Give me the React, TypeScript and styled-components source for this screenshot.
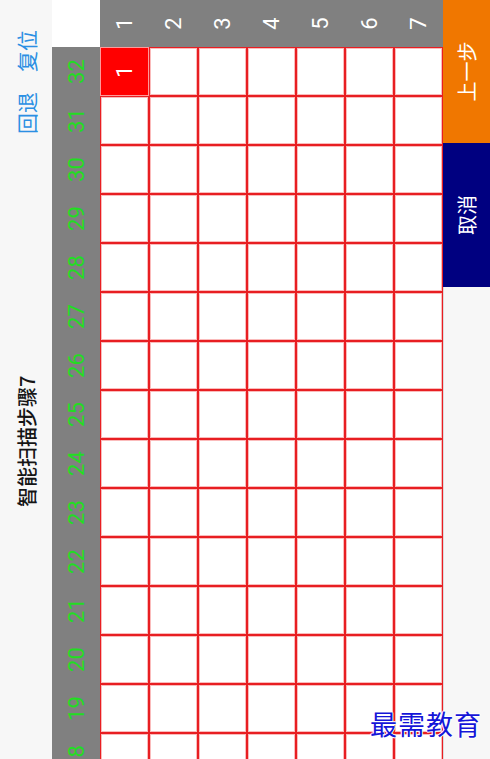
import styled, {createGlobalStyle} from 'styled-components'

const GlobalStyle = createGlobalStyle`
  html, body {
    margin: 0;
    padding: 0;
    background: #f7f7f7;
  }
  body {
    font-family: Roboto, "Noto Sans CJK SC", sans-serif;
  }
`

const FIRST = 18
const LAST = 32
const ROWS = 7
const CELL = 49

const Screen = styled.div`
  position: relative;
  width: 490px;
  height: 759px;
  overflow: hidden;
  background: #f7f7f7;
`

// the app is drawn in landscape and the device shows it turned a quarter left
const Landscape = styled.div`
  width: 759px;
  height: 490px;
  display: flex;
  flex-direction: column;
  transform-origin: top left;
  transform: rotate(-90deg) translateX(-100%);
`

const TopBar = styled.div`
  flex: none;
  height: 52px;
  box-sizing: border-box;
  padding: 0 30px 0 252px;
  display: flex;
  align-items: center;
  background: #f7f7f7;
`

const Title = styled.div`
  flex: 1;
  font-family: "Noto Sans CJK SC", sans-serif;
  font-size: 20px;
  font-weight: 500;
  color: #151515;
`

const LinkButton = styled.button`
  margin-left: 20px;
  padding: 0;
  border: none;
  background: none;
  font-family: "Noto Sans CJK SC", sans-serif;
  font-size: 21px;
  color: #2b8fe3;
  cursor: pointer;
`

const Middle = styled.div`
  flex: 1;
  min-height: 0;
  display: flex;
`

const Board = styled.div`
  flex: 1;
  min-width: 0;
  overflow: hidden;
  display: flex;
  flex-direction: column;
`

const Strip = styled.div<{$head?: boolean}>`
  flex: none;
  height: ${p => (p.$head ? 48 : CELL)}px;
  display: flex;
  justify-content: flex-end;
  background: ${p => (p.$head ? '#808080' : '#fff')};
`

const Label = styled.div<{$color: string; $tall?: boolean}>`
  flex: none;
  width: ${p => (p.$tall ? 'auto' : `${CELL}px`)};
  height: ${p => (p.$tall ? `${CELL}px` : 'auto')};
  display: flex;
  align-items: center;
  justify-content: center;
  font-size: 22px;
  color: ${p => p.$color};
`

const Cell = styled.div<{$on?: boolean}>`
  flex: none;
  width: ${CELL}px;
  height: ${CELL}px;
  box-sizing: border-box;
  border: 1px solid ${p => (p.$on ? '#ff9a9a' : '#e81e22')};
  box-shadow: ${p => (p.$on ? 'none' : 'inset 0 0 0 1px rgba(240, 60, 60, 0.35)')};
  background: ${p => (p.$on ? '#ff0000' : '#fff')};
  display: flex;
  align-items: center;
  justify-content: center;
  font-size: 22px;
  color: #fff;
`

const Rail = styled.div`
  flex: none;
  width: 47px;
  display: flex;
  flex-direction: column;
`

const Corner = styled.div`
  height: 48px;
  background: #fff;
`

const RailHead = styled.div`
  flex: 1;
  display: flex;
  flex-direction: column;
  background: #808080;
`

const BottomBar = styled.div`
  flex: none;
  height: 47px;
  display: flex;
  justify-content: flex-end;
  background: #f7f7f7;
  box-shadow: inset 0 1px #dcdcdc;
`

const ActionButton = styled.button<{$bg: string; $w: number}>`
  width: ${p => p.$w}px;
  height: 100%;
  padding: 0;
  border: none;
  background: ${p => p.$bg};
  font-family: "Noto Sans CJK SC", sans-serif;
  font-size: 20px;
  color: #fff;
  cursor: pointer;
`

const Watermark = styled.div`
  position: absolute;
  right: 8px;
  bottom: 16px;
  font-family: "Noto Sans CJK SC", serif;
  font-size: 27px;
  letter-spacing: 1px;
  color: #1515d8;
  text-shadow: 1px 0 #fff, -1px 0 #fff, 0 1px #fff, 0 -1px #fff;
`

const cols = Array.from({length: LAST - FIRST + 1}, (_, i) => FIRST + i)
const rows = Array.from({length: ROWS}, (_, i) => i + 1)

export default function App() {
  return (
    <Screen>
      <GlobalStyle />
      <Landscape>
        <TopBar>
          <Title>智能扫描步骤7</Title>
          <LinkButton>回退</LinkButton>
          <LinkButton>复位</LinkButton>
        </TopBar>
        <Middle>
          <Board>
            <Strip $head>
              {cols.map(c => (
                <Label key={c} $color="#22dd22">{c}</Label>
              ))}
            </Strip>
            {rows.map(r => (
              <Strip key={r}>
                {cols.map(c => (
                  <Cell key={c} $on={r === 1 && c === LAST}>
                    {r === 1 && c === LAST ? '1' : ''}
                  </Cell>
                ))}
              </Strip>
            ))}
          </Board>
          <Rail>
            <Corner />
            <RailHead>
              {rows.map(r => (
                <Label key={r} $tall $color="#fff">{r}</Label>
              ))}
            </RailHead>
          </Rail>
        </Middle>
        <BottomBar>
          <ActionButton $bg="#000080" $w={144}>取消</ActionButton>
          <ActionButton $bg="#f07700" $w={143}>上一步</ActionButton>
        </BottomBar>
      </Landscape>
      <Watermark>最需教育</Watermark>
    </Screen>
  )
}
